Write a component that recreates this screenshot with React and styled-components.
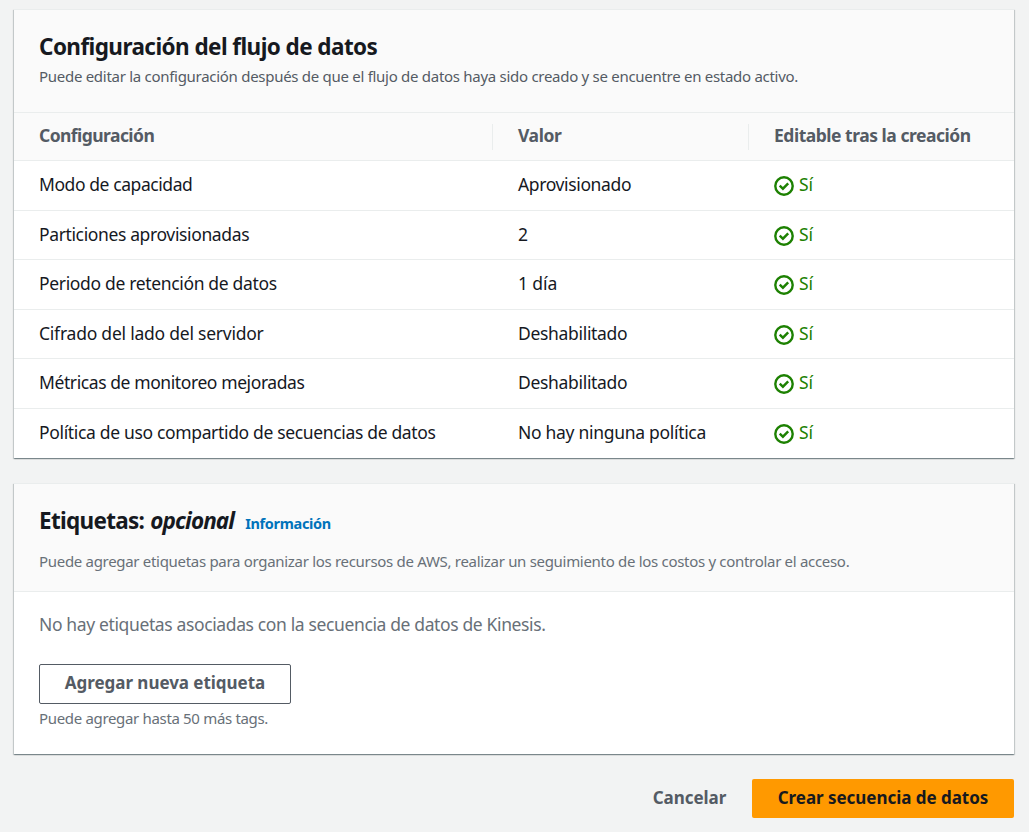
import React from "react";
import styled, { createGlobalStyle } from "styled-components";

const Global = createGlobalStyle`
  * { box-sizing: border-box; }
  body {
    margin: 0;
    background: #f2f3f3;
    color: #16191f;
    font-family: "Noto Sans", "Open Sans", sans-serif;
    font-size: 17.5px;
    line-height: 24px;
  }
`;

const Page = styled.main`
  width: 1029px;
  height: 832px;
  padding: 9px 15px 0 14px;
  overflow: hidden;
`;

const Card = styled.section`
  height: ${(p) => p.$height}px;
  margin-bottom: 25px;
  background: #fff;
  border-top: 1px solid #eaeded;
  box-shadow: 0 1px 1px 0 rgba(0, 28, 36, 0.3), 1px 1px 1px 0 rgba(0, 28, 36, 0.15),
    -1px 1px 1px 0 rgba(0, 28, 36, 0.15);
`;

const CardHeader = styled.header`
  height: ${(p) => p.$height}px;
  padding: 22px 25px 0;
  background: #fafafa;
  border-bottom: 1px solid #eaeded;
`;

const Line = styled.span`
  display: block;
  width: max-content;
  white-space: nowrap;
  letter-spacing: ${(p) => p.$track || 0}px;
`;

const Title = styled.h2`
  display: flex;
  align-items: baseline;
  margin: 0;
  font-size: 22.5px;
  line-height: 30px;
  font-weight: 700;
  white-space: nowrap;
`;

const Optional = styled.em`
  margin-left: 6px;
  letter-spacing: ${(p) => p.$track}px;
`;

const InfoLink = styled.a`
  margin-left: 11px;
  color: #0073bb;
  font-size: 14.5px;
  letter-spacing: ${(p) => p.$track}px;
`;

const Note = styled.p`
  margin: ${(p) => p.$top}px 0 0;
  color: ${(p) => p.$color || "#687078"};
  font-size: 15px;
  line-height: 20px;
`;

const Table = styled.div`
  display: grid;
  grid-template-rows: 48px repeat(6, 49.5px);
`;

const Row = styled.div`
  display: grid;
  grid-template-columns: 478px 256px 1fr;
  align-items: center;
  border-bottom: 1px solid #eaeded;
  &:last-child { border-bottom-color: transparent; }
`;

const HeadRow = styled(Row)`
  background: #fafafa;
  color: #545b64;
  font-weight: 700;
`;

const Cell = styled.div`
  display: flex;
  align-items: center;
  padding: 0 0 2px ${(p) => p.$left || 25}px;
`;

const HeadCell = styled(Cell)`
  height: 26px;
  padding-bottom: 3.5px;
  border-left: ${(p) => (p.$divided ? "1px solid #eaeded" : "0")};
`;

const Status = styled.div`
  display: flex;
  align-items: center;
  gap: 5px;
  color: #1d8102;
  svg { margin-top: 4px; }
`;

const CardBody = styled.div`
  padding: 20px 25px 0;
`;

const Empty = styled.p`
  margin: 0 0 28px;
  color: #687078;
`;

const Button = styled.button`
  display: flex;
  align-items: center;
  justify-content: center;
  width: ${(p) => p.$width}px;
  height: ${(p) => p.$height}px;
  padding: 0 0 2px;
  border: 1px solid ${(p) => p.$border || "transparent"};
  border-radius: 2px;
  background: ${(p) => p.$fill || "transparent"};
  color: ${(p) => p.$color || "#545b64"};
  font: inherit;
  font-size: 17px;
  font-weight: 700;
`;

const Actions = styled.footer`
  display: flex;
  justify-content: flex-end;
`;

const CheckIcon = () => (
  <svg width="20" height="20" viewBox="0 0 20 20" fill="none" stroke="#1d8102" strokeWidth="2.4">
    <circle cx="10" cy="10" r="8.7" />
    <path d="M5.7 9.7 8.9 12.7 14.2 7.3" />
  </svg>
);

const rows = [
  ["Modo de capacidad", -0.42, "Aprovisionado", -0.37],
  ["Particiones aprovisionadas", -0.37, "2", 0],
  ["Periodo de retención de datos", -0.34, "1 día", -0.1],
  ["Cifrado del lado del servidor", -0.23, "Deshabilitado", -0.32],
  ["Métricas de monitoreo mejoradas", -0.41, "Deshabilitado", -0.32],
  ["Política de uso compartido de secuencias de datos", -0.34, "No hay ninguna política", -0.3],
];

export default function App() {
  return (
    <Page>
      <Global />
      <Card $height={449}>
        <CardHeader $height={103}>
          <Title><Line $track={-0.57}>Configuración del flujo de datos</Line></Title>
          <Note $top={4} $color="#545b64">
            <Line $track={-0.285}>
              Puede editar la configuración después de que el flujo de datos haya sido creado y se encuentre en estado activo.
            </Line>
          </Note>
        </CardHeader>
        <Table>
          <HeadRow>
            <HeadCell><Line $track={-0.56}>Configuración</Line></HeadCell>
            <HeadCell $divided><Line $track={-0.4}>Valor</Line></HeadCell>
            <HeadCell $divided><Line $track={-0.48}>Editable tras la creación</Line></HeadCell>
          </HeadRow>
          {rows.map(([name, nameTrack, value, valueTrack]) => (
            <Row key={name}>
              <Cell><Line $track={nameTrack}>{name}</Line></Cell>
              <Cell $left={26}><Line $track={valueTrack}>{value}</Line></Cell>
              <Cell $left={26}>
                <Status><CheckIcon /><Line $track={-0.2}>Sí</Line></Status>
              </Cell>
            </Row>
          ))}
        </Table>
      </Card>
      <Card $height={271}>
        <CardHeader $height={108}>
          <Title>
            <Line $track={-0.7}>Etiquetas:</Line>
            <Optional $track={-0.88}>opcional</Optional>
            <InfoLink $track={-0.33}>Información</InfoLink>
          </Title>
          <Note $top={13}>
            <Line $track={-0.305}>
              Puede agregar etiquetas para organizar los recursos de AWS, realizar un seguimiento de los costos y controlar el acceso.
            </Line>
          </Note>
        </CardHeader>
        <CardBody>
          <Empty><Line $track={-0.37}>No hay etiquetas asociadas con la secuencia de datos de Kinesis.</Line></Empty>
          <Button $width={252} $height={40} $border="#545b64"><Line $track={-0.04}>Agregar nueva etiqueta</Line></Button>
          <Note $top={4}><Line $track={-0.33}>Puede agregar hasta 50 más tags.</Line></Note>
        </CardBody>
      </Card>
      <Actions>
        <Button $width={125} $height={39}><Line $track={-0.04}>Cancelar</Line></Button>
        <Button $width={262} $height={39} $fill="#ff9900" $color="#16191f"><Line $track={-0.04}>Crear secuencia de datos</Line></Button>
      </Actions>
    </Page>
  );
}
